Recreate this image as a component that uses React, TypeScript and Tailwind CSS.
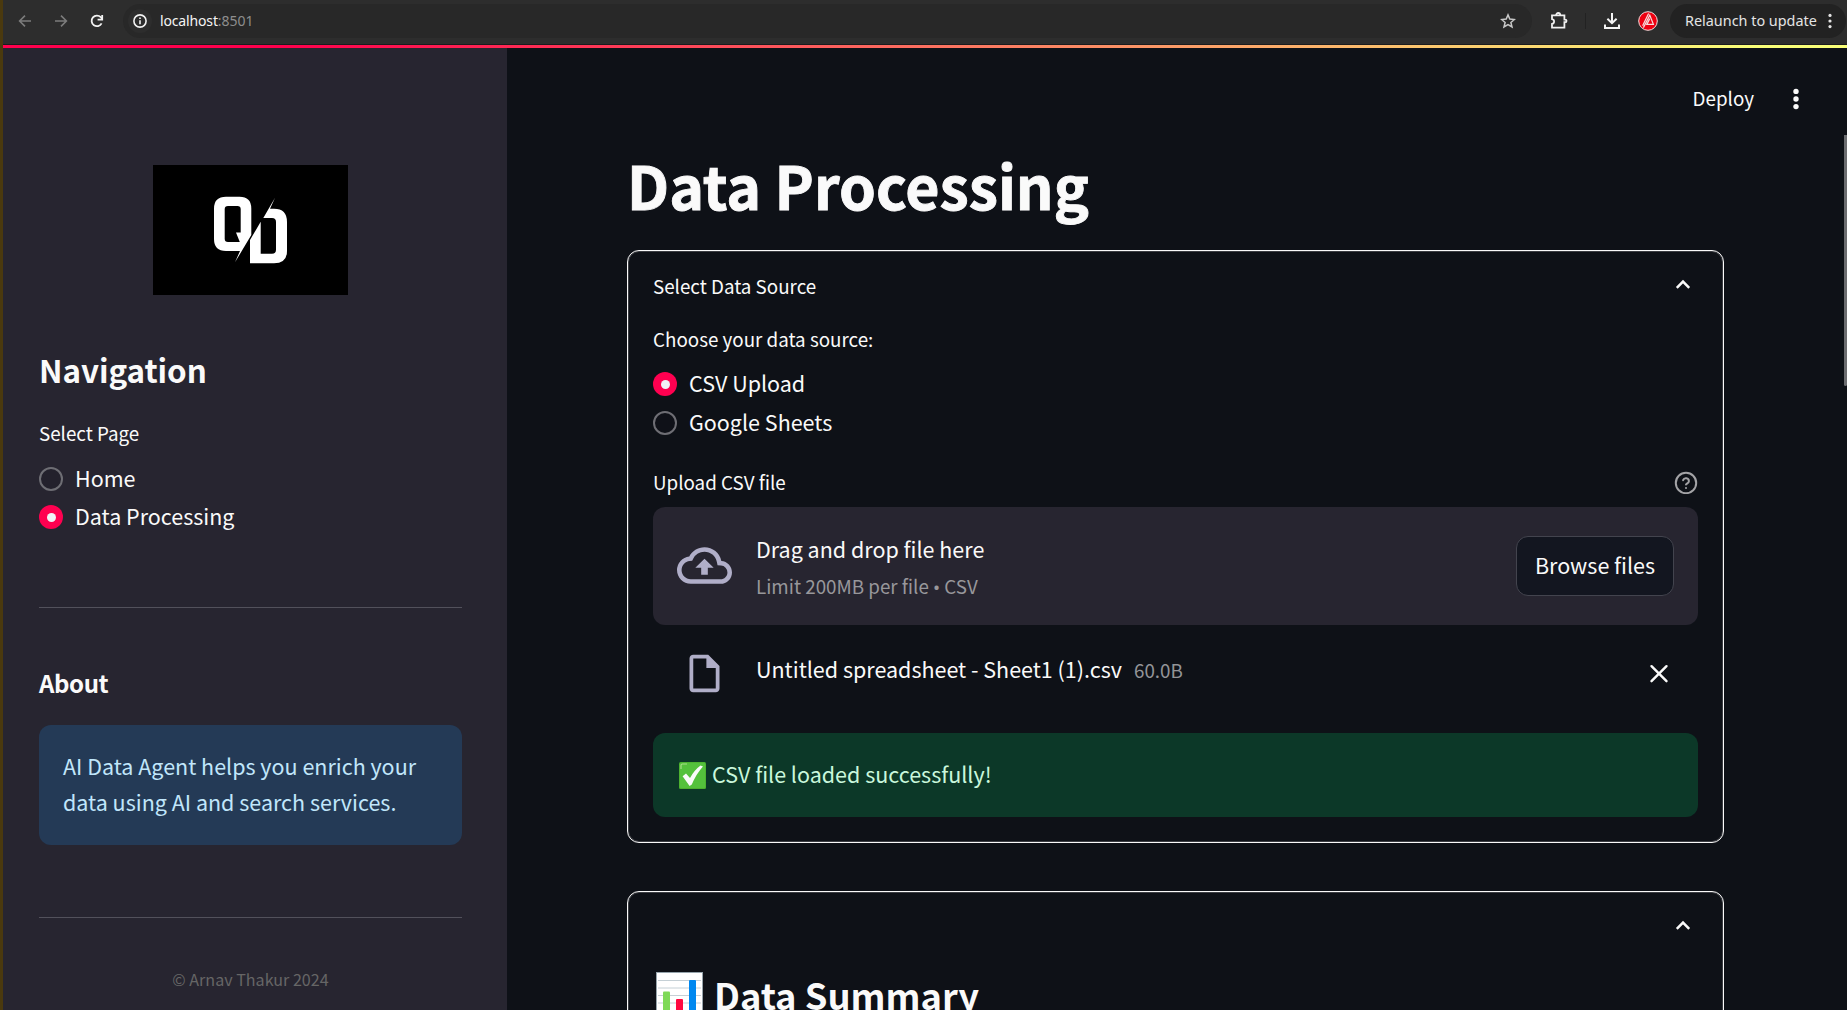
import type { ReactNode } from "react";

function Radio({ label, checked }: { label: string; checked?: boolean }) {
  return (
    <div className="flex h-6 items-start gap-3">
      {checked ? (
        <span className="flex size-6 shrink-0 items-center justify-center rounded-full bg-[#ff0050]">
          <span className="size-[9px] rounded-full bg-[#f0f2f6]" />
        </span>
      ) : (
        <span className="size-6 shrink-0 rounded-full border-2 border-[#6e6e74] bg-[#131620]/20" />
      )}
      <span className="text-[21.5px] leading-[21px]">{label}</span>
    </div>
  );
}

function Chevron() {
  return (
    <svg className="mr-[3px] size-6" viewBox="0 0 24 24" fill="none" stroke="#fafafa" strokeWidth="2.5">
      <path d="M5.8 13.8 12 7.6l6.2 6.2" />
    </svg>
  );
}

function Expander({ title, children }: { title: string; children: ReactNode }) {
  return (
    <section className="flex shrink-0 flex-col rounded-xl border border-[#fafafa] px-[25px] pb-[25px] shadow-[inset_0_0_0_1px_#3c3e43]">
      <div className="mt-5 flex h-[30px] items-center justify-between text-[18.8px] leading-[30px]">
        <span>{title}</span>
        <Chevron />
      </div>
      {children}
    </section>
  );
}

function BrowserBar() {
  return (
    <header className="flex h-[45px] shrink-0 border-b border-[#1b1b1d] bg-[#2d2d2d] pt-1 font-['Noto_Sans',sans-serif]">
      <div className="flex h-[34px] w-[120px] shrink-0 items-center">
        <svg className="ml-[14px] size-4" viewBox="0 0 16 16" fill="none" stroke="#7c7c7c" strokeWidth="1.6">
          <path d="M14 8H2.8M8 2.6 2.6 8 8 13.4" />
        </svg>
        <svg className="ml-[20px] size-4" viewBox="0 0 16 16" fill="none" stroke="#7c7c7c" strokeWidth="1.6">
          <path d="M2 8h11.2M8 2.6 13.4 8 8 13.4" />
        </svg>
        <svg className="ml-[20px] size-4" viewBox="0 0 16 16" fill="none" stroke="#f2f2f2" strokeWidth="1.8">
          <path d="M12.6 10.4A5.3 5.3 0 1 1 11.8 4.2L13.2 5.8" />
          <path d="M13.2 2v4.6H8.6" />
        </svg>
      </div>
      <div className="flex h-[34px] w-[1409px] shrink-0 items-center rounded-full bg-[#282828]">
        <span className="ml-[5px] flex size-6 items-center justify-center rounded-full bg-[#2d2d2d]">
          <svg className="size-[14px]" viewBox="0 0 14 14" fill="none" stroke="#f2f2f2" strokeWidth="1.6">
            <circle cx="7" cy="7" r="6.1" />
            <path d="M7 6.2v4M7 3.6v1.5" />
          </svg>
        </span>
        <span className="ml-2 pb-px text-[14px] tracking-[-0.15px] text-[#f4f4f4]">localhost</span>
        <span className="pb-px text-[14px] text-[#8e8e8e]">:8501</span>
        <svg className="mr-4 ml-auto size-4" viewBox="0 0 16 16" fill="none" stroke="#c8c8c8" strokeWidth="1.5">
          <path d="m8 1.9 1.8 4.2 4.6.4-3.5 3 1.1 4.5L8 11.6 4 14l1.1-4.5-3.5-3 4.6-.4Z" />
        </svg>
      </div>
      <div className="ml-[18px] flex h-[34px] items-center">
        <svg className="size-[18px]" viewBox="0 0 18 18" fill="none" stroke="#f0f0f0" strokeWidth="1.8">
          <path d="M2 3.4h12.4v4.2h.8a1.3 1.3 0 0 1 0 2.6h-.8v5.4H2v-3.6c2.8-.5 2.8-4.4 0-4.9Z" />
          <path d="M6.2 3a2 2 0 0 1 4 0" />
        </svg>
        <span className="ml-[17px] h-4 w-px bg-[#222]" />
        <svg className="ml-[18px] size-4" viewBox="0 0 16 16" fill="none" stroke="#f5f5f5" strokeWidth="2">
          <path d="M8 0v9.6M3.4 5.8 8 10.2l4.6-4.4M1 11.4V15h14v-3.6" />
        </svg>
        <svg className="mb-px ml-[18px] size-5" viewBox="0 0 20 20" fill="none" stroke="#f6dede">
          <circle cx="10" cy="10" r="9.3" fill="#ee0010" strokeWidth="1" />
          <path d="M5.4 16.6 11.8 4.2l3.6 9.2H8.8l3-5.8M4.6 14.8 10.6 2.6" strokeWidth="1.2" />
        </svg>
      </div>
      <div className="ml-3 flex h-[34px] w-[176px] shrink-0 items-center rounded-full bg-[#222] pl-[15px]">
        <span className="pb-px text-[14.4px] whitespace-nowrap text-[#e4e4e4]">Relaunch to update</span>
        <svg className="mr-[14px] ml-auto h-4 w-1" viewBox="0 0 4 16" fill="#e4e4e4">
          <circle cx="2" cy="2.4" r="1.6" />
          <circle cx="2" cy="8" r="1.6" />
          <circle cx="2" cy="13.6" r="1.6" />
        </svg>
      </div>
    </header>
  );
}

function Sidebar() {
  return (
    <aside className="flex w-[504px] shrink-0 flex-col bg-[#272530] pr-[45px] pl-9">
      <svg className="mt-[120px] ml-[114px] h-[130px] w-[195px] shrink-0 bg-black" viewBox="0 0 195 130" fill="#fff" fillRule="evenodd">
        <path d="M73 31.7H86.5Q98.3 31.7 98.3 43.5V70L82 97.3 87 86H73Q61 86 61 74V43.5Q61 31.7 73 31.7ZM75 41Q71.7 41 71.7 44.3V73.7Q71.7 77 75 77H86.8L83 67.6H87.7V44.3Q87.7 41 84.4 41Z" />
        <path d="M97 98.3V75L107.7 56.7V88.7H119Q123 88.7 123 84.7V57Q123 53 119 53H110.3L122 32.7 117 43.7H121Q134 43.7 134 57V86Q134 98.3 121 98.3Z" />
      </svg>
      <h2 className="mt-[52px] h-11 text-[31.4px] leading-[45px] font-semibold tracking-[-0.05px]">Navigation</h2>
      <p className="mt-[27px] h-[30px] text-[18.8px] leading-[30px]">Select Page</p>
      <div className="mt-[19px] flex flex-col gap-[14px]">
        <Radio label="Home" />
        <Radio label="Data Processing" checked />
      </div>
      <hr className="mt-[78px] border-[#52515b]" />
      <h3 className="mt-[57px] h-9 text-[24px] leading-[36px] font-semibold tracking-[-0.4px]">About</h3>
      <div className="mt-6 h-[120px] shrink-0 rounded-xl bg-[#243a56] px-6 pt-[23px] text-[21.5px] leading-[36px] text-[#c0e6fb]">
        AI Data Agent helps you enrich your data using AI and search services.
      </div>
      <hr className="mt-[72px] border-[#52515b]" />
      <p className="mt-[47px] text-center text-[16.1px] leading-[28px] text-[#666]">© Arnav Thakur 2024</p>
    </aside>
  );
}

function Dropzone() {
  return (
    <div className="mt-[10px] flex h-[118px] shrink-0 items-center rounded-xl bg-[#272530] px-6">
      <svg className="mb-[2px] size-[55px]" viewBox="0 0 24 24" fill="#b0aec8">
        <path d="M19.35 10.04A7.49 7.49 0 0 0 12 4C9.11 4 6.6 5.64 5.35 8.04A5.994 5.994 0 0 0 0 14c0 3.31 2.69 6 6 6h13c2.76 0 5-2.24 5-5 0-2.64-2.05-4.78-4.65-4.96zM19 18H6c-2.21 0-4-1.79-4-4 0-2.05 1.53-3.76 3.56-3.97l1.07-.11.5-.95A5.469 5.469 0 0 1 12 6c2.62 0 4.88 1.86 5.39 4.43l.3 1.5 1.53.11A2.98 2.98 0 0 1 22 15c0 1.65-1.35 3-3 3zM8 13h2.55v3h2.9v-3H16l-4-4z" />
      </svg>
      <div className="ml-6 flex flex-col pt-[3px]">
        <span className="text-[21.5px] leading-[36px]">Drag and drop file here</span>
        <span className="mt-px text-[18.8px] leading-[36px] text-[#98979b]">
          Limit 200MB per file <span className="font-['Noto_Sans',sans-serif] leading-none">•</span> CSV
        </span>
      </div>
      <button className="ml-auto h-[60px] w-[158px] rounded-xl border border-[#43444e] bg-[#131620] pb-[2px] text-[21.5px]">Browse files</button>
    </div>
  );
}

function CheckEmoji() {
  return (
    <svg className="size-[27px]" viewBox="0 0 27 27">
      <rect width="27" height="27" rx="1.5" fill="#4caf2e" />
      <rect x=".8" y=".8" width="25.4" height="25.2" rx="1.5" fill="#54c13c" />
      <path d="M2 7V3.5Q2 2 3.5 2H8" fill="none" stroke="#a5dd85" strokeWidth="1.2" />
      <path d="m3.6 14.2 3.4-2.6 4 4.4Q15.5 8 21.5 3.6L24 4.4Q17 12 12.8 22.6L10.6 24Z" fill="#fafafa" />
    </svg>
  );
}

function ChartEmoji() {
  return (
    <svg className="h-[50px] w-[47px]" viewBox="0 0 47 50">
      <rect x=".5" y=".5" width="46" height="49" fill="#fff" stroke="#96a4ac" />
      <path d="M2 8.5h43M2 16h43M2 23.5h43M2 31h43M2 38.5h43" stroke="#c5d0d6" />
      <rect x="7" y="19.5" width="7" height="30.5" rx="1" fill="#7ed957" />
      <rect x="20" y="27" width="7" height="23" rx="1" fill="#ff0a40" />
      <rect x="33" y="8" width="7" height="42" rx="1" fill="#0088f0" />
    </svg>
  );
}

function Main() {
  return (
    <main className="relative flex min-w-0 flex-1 flex-col overflow-hidden bg-[#0e1117] pr-[123px] pl-[120px]">
      <div className="mr-[-78px] flex shrink-0 items-center justify-end pt-[38px]">
        <span className="text-[18.8px] leading-[30px]">Deploy</span>
        <svg className="mt-[2px] mr-[-6px] ml-[30px] h-6 w-6" viewBox="0 0 24 24" fill="#fafafa">
          <circle cx="12" cy="4.4" r="2.7" />
          <circle cx="12" cy="12" r="2.7" />
          <circle cx="12" cy="19.6" r="2.7" />
        </svg>
      </div>
      <h1 className="mt-[31px] mb-[26px] h-20 shrink-0 text-[59px] leading-[81px] font-bold [-webkit-text-stroke:0.9px_#fafafa]">Data Processing</h1>
      <Expander title="Select Data Source">
        <p className="mt-[23px] text-[18.8px] leading-[30px]">Choose your data source:</p>
        <div className="mt-[18px] flex flex-col gap-[15px]">
          <Radio label="CSV Upload" checked />
          <Radio label="Google Sheets" />
        </div>
        <div className="mt-8 flex h-[30px] items-center justify-between">
          <span className="text-[18.8px] leading-[30px]">Upload CSV file</span>
          <svg className="size-6" viewBox="0 0 24 24" fill="none" stroke="#a3a3a6" strokeWidth="2" strokeLinecap="round">
            <circle cx="12" cy="13" r="10.2" />
            <path d="M9.1 10.2a3 3 0 0 1 5.8 1c0 2-2.9 2.6-2.9 3.4M12 18h.01" />
          </svg>
        </div>
        <Dropzone />
        <div className="mt-[26px] flex h-[45px] items-center pr-[27px] pl-[29px]">
          <svg className="size-[45px]" viewBox="0 0 24 24" fill="#b0aec8">
            <path d="M14 2H6c-1.1 0-1.99.9-1.99 2L4 20c0 1.1.89 2 1.99 2H18c1.1 0 2-.9 2-2V8l-6-6zM6 20V4h7v5h5v11H6z" />
          </svg>
          <div className="ml-[29px] flex items-baseline gap-3 pb-[9px]">
            <span className="text-[21.5px] leading-[36px]">Untitled spreadsheet - Sheet1 (1).csv</span>
            <span className="text-[18.8px] leading-[36px] text-[#939498]">60.0B</span>
          </div>
          <svg className="ml-auto size-6" viewBox="0 0 24 24" fill="none" stroke="#fafafa" strokeWidth="2.4" strokeLinecap="round">
            <path d="m4.5 4.2 15 15M19.5 4.2l-15 15" />
          </svg>
        </div>
        <div className="mt-[37px] flex h-[84px] items-center gap-[6px] rounded-xl bg-[#0c3828] px-[26px] text-[21.5px] text-[#c9f7dc]">
          <CheckEmoji />
          <span className="pb-[2px]">CSV file loaded successfully!</span>
        </div>
      </Expander>
      <div className="h-12 shrink-0" />
      <Expander title="">
        <h2 className="mt-[30px] flex h-[52px] gap-[11px] pl-[3px] text-[36.3px] leading-[44px] font-semibold">
          <ChartEmoji />
          <span>Data Summary</span>
        </h2>
        <div className="h-40" />
      </Expander>
      <span className="absolute top-[90px] right-0 h-[251px] w-[3px] rounded-b-sm bg-[#6c6d70]" />
    </main>
  );
}

export default function App() {
  return (
    <div className="flex h-[1010px] w-[1847px] overflow-hidden bg-[#4a390e] pl-[3px] font-['Noto_Sans_CJK_SC',sans-serif] text-[#fafafa]">
      <div className="flex min-w-0 flex-1 flex-col">
        <BrowserBar />
        <div className="relative flex min-h-0 flex-1">
          <Sidebar />
          <Main />
          <span className="absolute inset-x-0 top-0 h-[3px] bg-linear-to-r/srgb from-[#ff004d] from-15% to-[#faff78] to-95%" />
        </div>
      </div>
    </div>
  );
}
